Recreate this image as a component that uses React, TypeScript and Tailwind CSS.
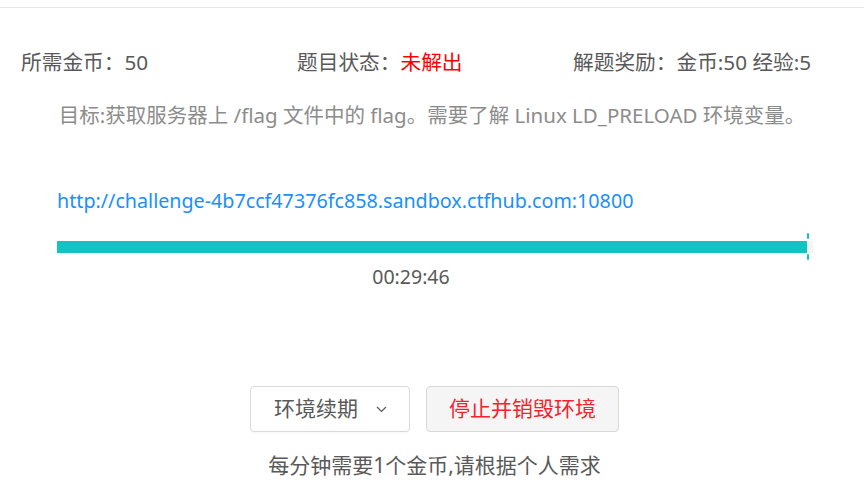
const font = "font-['Noto_Sans','Noto_Sans_CJK_SC',sans-serif]";

export default function App() {
  return (
    <div className={`w-[864px] h-[487px] bg-white overflow-hidden ${font}`}>
      <div className="h-[8px] border-b border-[#e8e8e8]" />

      {/* 题目信息 */}
      <div className="mt-[40px] grid grid-cols-3 pl-[21px] pr-[15px] text-[20.7px] leading-[28px] text-[#595959]">
        <div>所需金币：50</div>
        <div>
          题目状态：<span className="text-[#ff0000]">未解出</span>
        </div>
        <div className="whitespace-nowrap">解题奖励：金币:50 经验:5</div>
      </div>

      <p className="mt-[25px] text-center text-[20.5px] leading-[28px] text-[#8c8c8c] whitespace-nowrap">
        目标:获取服务器上 /flag 文件中的 flag。需要了解 Linux LD_PRELOAD 环境变量。
      </p>

      <div className="mt-[58px] pl-[57px]">
        <a className="block text-[19.7px] leading-[28px] text-[#1890ff]">
          http://challenge-4b7ccf47376fc858.sandbox.ctfhub.com:10800
        </a>

        <div className="relative mt-[26px] w-[756px] h-[12px] bg-[#f5f5f5]">
          <div className="h-full w-[750px] bg-[#13c2c2]" />
          <span className="absolute left-[750px] top-[-8px] w-[2px] h-[6px] rounded-sm bg-[#13c2c2]" />
          <span className="absolute left-[750px] top-[13px] w-[2px] h-[6px] rounded-sm bg-[#13c2c2]" />
        </div>

        <div className="mt-[10px] w-[708px] text-center text-[19.5px] leading-[28px] text-[#595959]">
          00:29:46
        </div>
      </div>

      <div className="mt-[95px] flex justify-center gap-[16px] pl-[5px]">
        <button className="flex items-center h-[46px] w-[160px] pl-[23px] rounded border border-[#d9d9d9] bg-white text-[21px] text-[#595959] shadow-[0_2px_0_rgba(0,0,0,0.015)]">
          环境续期
          <svg className="ml-[18px]" width="11" height="7" viewBox="0 0 11 7" fill="none">
            <polyline points="1,1 5.5,5.5 10,1" stroke="#595959" strokeWidth="1.2" />
          </svg>
        </button>
        <button className="h-[46px] w-[193px] rounded border border-[#d9d9d9] bg-[#f5f5f5] text-[21px] text-[#f5222d]">
          停止并销毁环境
        </button>
      </div>

      <p className="mt-[19px] pl-[5px] text-center text-[21px] leading-[28px] text-[#595959]">
        每分钟需要1个金币,请根据个人需求
      </p>
    </div>
  );
}
